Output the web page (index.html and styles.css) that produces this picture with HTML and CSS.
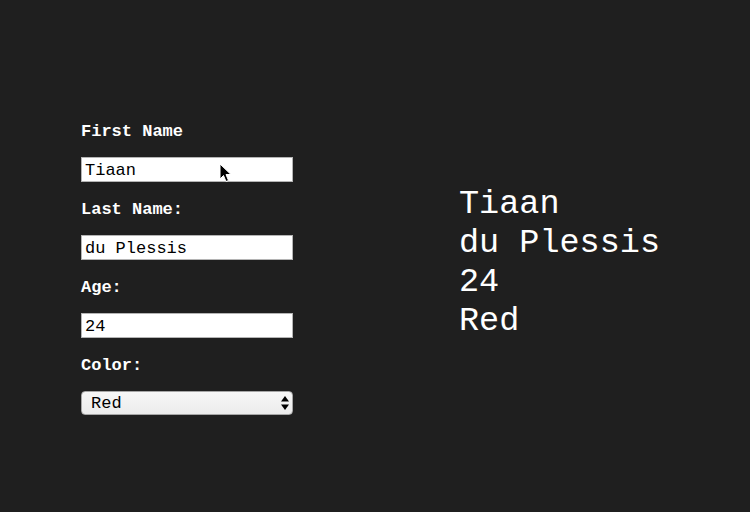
FILE: index.html
```html
<!DOCTYPE html>
<html>
<head>
<meta charset="utf-8">
<link rel="stylesheet" href="styles.css">
</head>
<body>
<div class="page">
  <form class="form">
    <label class="label" for="first">First Name</label>
    <input class="field" id="first" type="text" value="Tiaan">
    <label class="label" for="last">Last Name:</label>
    <input class="field" id="last" type="text" value="du Plessis">
    <label class="label" for="age">Age:</label>
    <input class="field" id="age" type="text" value="24">
    <label class="label" for="color">Color:</label>
    <div class="select-wrap">
      <select class="select" id="color">
        <option>Red</option>
        <option>Green</option>
        <option>Blue</option>
      </select>
      <svg class="select-arrows" width="8" height="14" viewBox="0 0 8 14">
        <path d="M4 0 L8 5.5 L0 5.5 Z" fill="#000"/>
        <path d="M4 14 L8 8.5 L0 8.5 Z" fill="#000"/>
      </svg>
    </div>
  </form>
  <div class="output">
    <div>Tiaan</div>
    <div>du Plessis</div>
    <div>24</div>
    <div>Red</div>
  </div>
</div>
<svg class="cursor" width="13" height="20" viewBox="0 0 13 20">
  <path d="M1 1 L1 16 L4.5 12.5 L7 18.5 L9.5 17.5 L7 11.5 L12 11.5 Z" fill="#000" stroke="#fff" stroke-width="1" stroke-linejoin="round"/>
</svg>
</body>
</html>
```
FILE: styles.css
```css
html, body {
  margin: 0;
  padding: 0;
  background: #1f1f1f;
}
body {
  width: 750px;
  height: 512px;
  overflow: hidden;
  position: relative;
  font-family: "Liberation Mono", "Courier New", monospace;
  color: #fff;
}
.page {
  display: flex;
  padding: 122px 0 0 81px;
}
.form {
  display: flex;
  flex-direction: column;
  width: 212px;
  margin: 0;
}
.label {
  display: block;
  font-size: 17px;
  font-weight: bold;
  line-height: 20px;
  margin-bottom: 15px;
  color: #fff;
}
.field {
  box-sizing: border-box;
  width: 212px;
  height: 25px;
  margin: 0 0 18px 0;
  padding: 1px 3px 0 3px;
  border: 1px solid #b4b4b4;
  background: #fff;
  color: #000;
  font-family: "Liberation Mono", "Courier New", monospace;
  font-size: 17px;
  outline: none;
}
.select-wrap {
  position: relative;
  width: 212px;
  height: 24px;
}
.select {
  appearance: none;
  -webkit-appearance: none;
  box-sizing: border-box;
  width: 212px;
  height: 24px;
  margin: 0;
  padding: 1px 0 0 9px;
  border: 1px solid #a6a6a6;
  border-radius: 4px;
  background: linear-gradient(#f7f7f7, #ececec);
  color: #000;
  font-family: "Liberation Mono", "Courier New", monospace;
  font-size: 17px;
}
.select-arrows {
  position: absolute;
  right: 4px;
  top: 5px;
  pointer-events: none;
}
.output {
  margin: 63px 0 0 166px;
  font-size: 33.5px;
  line-height: 39px;
  font-weight: normal;
  color: #fff;
}
.cursor {
  position: absolute;
  left: 219px;
  top: 163px;
}
```
